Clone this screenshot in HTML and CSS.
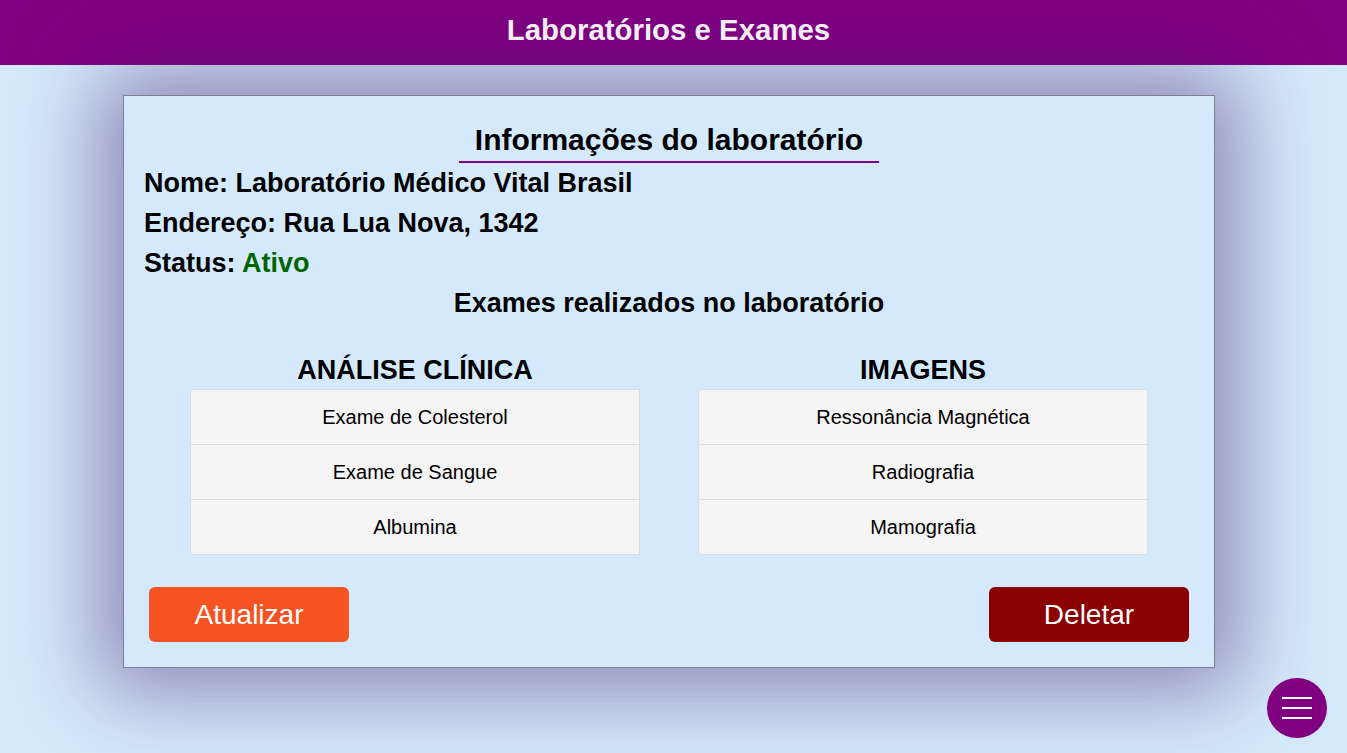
FILE: index.html
```html
<!DOCTYPE html>
<html lang="pt-BR">
<head>
<meta charset="utf-8">
<title>Laboratórios e Exames</title>
<link rel="stylesheet" href="styles.css">
</head>
<body>
<header class="topbar">
  <h1 class="topbar-title">Laboratórios e Exames</h1>
</header>
<main class="card">
  <div class="card-title-wrap">
    <h2 class="card-title">Informações do laboratório</h2>
  </div>
  <p class="info">Nome: Laboratório Médico Vital Brasil</p>
  <p class="info">Endereço: Rua Lua Nova, 1342</p>
  <p class="info">Status: <span class="status-active">Ativo</span></p>
  <h3 class="exams-heading">Exames realizados no laboratório</h3>
  <div class="columns">
    <section class="column">
      <h4 class="column-title">ANÁLISE CLÍNICA</h4>
      <ul class="exam-list">
        <li>Exame de Colesterol</li>
        <li>Exame de Sangue</li>
        <li>Albumina</li>
      </ul>
    </section>
    <section class="column">
      <h4 class="column-title">IMAGENS</h4>
      <ul class="exam-list">
        <li>Ressonância Magnética</li>
        <li>Radiografia</li>
        <li>Mamografia</li>
      </ul>
    </section>
  </div>
  <div class="actions">
    <button class="btn btn-update">Atualizar</button>
    <button class="btn btn-delete">Deletar</button>
  </div>
</main>
<button class="menu-fab" aria-label="Menu">
  <span class="menu-line"></span>
  <span class="menu-line"></span>
  <span class="menu-line"></span>
</button>
</body>
</html>
```

FILE: styles.css
```css
* { box-sizing: border-box; }

html, body {
  margin: 0;
  padding: 0;
}

body {
  background: #d4eafc;
  font-family: "Liberation Sans", Arial, sans-serif;
  color: #000;
  min-height: 753px;
  overflow: hidden;
}

.topbar {
  background: #800080;
  height: 65px;
  padding: 0 10px 6px 0;
}

.topbar-title {
  margin: 0;
  text-align: center;
  font-size: 29.4px;
  line-height: 59px;
  font-weight: bold;
  color: #f3eef6;
}

.card {
  width: 1092px;
  margin: 30px 0 0 123px;
  border: 1px solid #7f7f8f;
  background: #d4eafc;
  box-shadow: 0 0 80px 22px rgba(70, 30, 110, 0.5);
  padding: 26px 20px 25px 20px;
}

.card-title-wrap {
  text-align: center;
}

.card-title {
  display: inline-block;
  margin: 0;
  padding: 0 16px 3px;
  font-size: 30px;
  line-height: 36px;
  font-weight: bold;
  border-bottom: 2px solid #800080;
}

.info {
  margin: 0;
  font-size: 27px;
  line-height: 40px;
  font-weight: bold;
}

.status-active {
  color: #006400;
}

.exams-heading {
  margin: 0;
  text-align: center;
  font-size: 27px;
  line-height: 40px;
  font-weight: bold;
}

.columns {
  display: flex;
  justify-content: center;
  gap: 58px;
  margin-top: 29px;
}

.column {
  width: 450px;
}

.column-title {
  margin: 0;
  text-align: center;
  font-size: 27px;
  line-height: 37px;
  font-weight: bold;
}

.exam-list {
  list-style: none;
  margin: 0;
  padding: 0;
  border: 1px solid #dcdcdc;
  background: #f5f5f5;
}

.exam-list li {
  height: 54px;
  line-height: 54px;
  text-align: center;
  font-size: 20px;
}

.exam-list li + li {
  height: 55px;
  border-top: 1px solid #dcdcdc;
}

.actions {
  display: flex;
  justify-content: space-between;
  padding: 0 5px;
  margin-top: 32px;
}

.btn {
  width: 200px;
  height: 55px;
  border: none;
  border-radius: 6px;
  color: #fff;
  font-family: "Liberation Sans", Arial, sans-serif;
  font-size: 28px;
  padding: 0;
  cursor: pointer;
}

.btn-update {
  background: #f55322;
}

.btn-delete {
  background: #8b0000;
}

.menu-fab {
  position: fixed;
  right: 20px;
  bottom: 15px;
  width: 60px;
  height: 60px;
  border-radius: 50%;
  border: none;
  background: #800080;
  padding: 0;
  display: flex;
  flex-direction: column;
  align-items: center;
  justify-content: center;
  gap: 8px;
}

.menu-line {
  display: block;
  width: 30px;
  height: 2px;
  background: #fff;
}
```
